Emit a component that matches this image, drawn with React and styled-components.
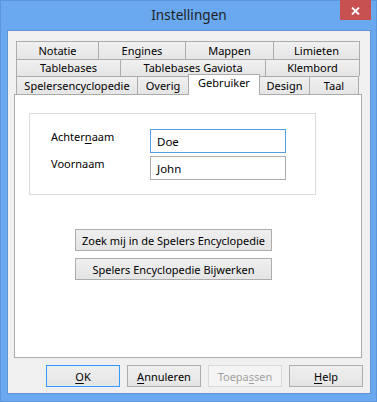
import React from 'react';
import styled, { createGlobalStyle } from 'styled-components';

const GlobalStyle = createGlobalStyle`
  html, body {
    margin: 0;
    padding: 0;
    background: #ffffff;
  }
  body {
    font-family: "Noto Sans", "Open Sans", sans-serif;
    font-size: 11px;
    color: #000;
  }
`;

const tabRows = [
  [
    { label: 'Notatie', w: 83 },
    { label: 'Engines', w: 88 },
    { label: 'Mappen', w: 89 },
    { label: 'Limieten', w: 87 },
  ],
  [
    { label: 'Tablebases', w: 105 },
    { label: 'Tablebases Gaviota', w: 146 },
    { label: 'Klembord', w: 95 },
  ],
  [
    { label: 'Spelersencyclopedie', w: 122 },
    { label: 'Overig', w: 52 },
    { label: 'Gebruiker', w: 72, active: true },
    { label: 'Design', w: 51 },
    { label: 'Taal', w: 50 },
  ],
];

export default function App() {
  return (
    <>
      <GlobalStyle />
      <Window>
        <TitleBar>
          <span />
          <Title>Instellingen</Title>
          <CloseButton>
            <svg width="9" height="8" viewBox="0 0 9 8">
              <path d="M1 0.5 L8 7.5 M8 0.5 L1 7.5" stroke="#fff" strokeWidth="1.8" />
            </svg>
          </CloseButton>
        </TitleBar>
        <Client>
          <TabStrip>
            {tabRows.map((row, i) => (
              <TabRow key={i} h={i === 1 ? 17 : 18}>
                {row.map((t) => (
                  <Tab key={t.label} w={t.w} active={t.active}>
                    {t.label}
                  </Tab>
                ))}
              </TabRow>
            ))}
          </TabStrip>
          <Panel>
            <GroupBox>
              <FieldLabel>
                Achter<Accel>n</Accel>aam
              </FieldLabel>
              <TextInput focused>Doe</TextInput>
              <FieldLabel>Voornaam</FieldLabel>
              <TextInput>John</TextInput>
            </GroupBox>
            <ActionList>
              <Button>Zoek mij in de Spelers Encyclopedie</Button>
              <Button>Spelers Encyclopedie Bijwerken</Button>
            </ActionList>
          </Panel>
          <ButtonBar>
            <Button w={74} primary>
              <Accel>O</Accel>K
            </Button>
            <Button w={74}>
              <Accel>A</Accel>nnuleren
            </Button>
            <Button w={74} disabled>
              Toepa<Accel>s</Accel>sen
            </Button>
            <Button w={74}>
              <Accel>H</Accel>elp
            </Button>
          </ButtonBar>
        </Client>
      </Window>
    </>
  );
}

const Window = styled.div`
  width: 377px;
  height: 402px;
  box-sizing: border-box;
  background: #6aa9f0;
  box-shadow: inset 0 0 0 1px #5b96dc;
  display: flex;
  flex-direction: column;
  padding: 0 6px 8px 7px;
`;

const TitleBar = styled.div`
  height: 30px;
  display: grid;
  grid-template-columns: 1fr auto 1fr;
  align-items: start;
  margin-right: -6px;
  padding-right: 6px;
`;

const Title = styled.div`
  font-size: 13.6px;
  color: #1f1f1f;
  line-height: 18px;
  padding-top: 6px;
`;

const CloseButton = styled.div`
  justify-self: end;
  width: 31px;
  height: 20px;
  background: #c75050;
  display: flex;
  align-items: center;
  justify-content: center;
  padding-top: 2px;
  box-sizing: border-box;
`;

const Client = styled.div`
  flex: 1;
  background: #f0f0f0;
  border: 1px solid #5e93d4;
  display: flex;
  flex-direction: column;
  padding: 10px 7px 0 6px;
`;

const TabStrip = styled.div`
  margin: 0 3px 0 2px;
  display: flex;
  flex-direction: column;
`;

const TabRow = styled.div`
  display: flex;
  height: ${(p) => p.h}px;
`;

const Tab = styled.div`
  box-sizing: border-box;
  width: ${(p) => p.w}px;
  flex: none;
  border: 1px solid #acacac;
  border-bottom: none;
  margin-left: -1px;
  &:first-child {
    margin-left: 0;
  }
  background: ${(p) => (p.active ? '#ffffff' : 'linear-gradient(#f0f0f0, #e5e5e5)')};
  display: flex;
  align-items: center;
  justify-content: center;
  white-space: nowrap;
  line-height: 14px;
  ${(p) =>
    p.active &&
    `
    position: relative;
    z-index: 1;
    height: 21px;
    margin-top: -2px;
    padding-bottom: 4px;
  `}
`;

const Panel = styled.div`
  height: 264px;
  box-sizing: border-box;
  margin-right: 1px;
  background: #ffffff;
  border: 1px solid #acacac;
  padding: 18px 0 0 14px;
  display: flex;
  flex-direction: column;
`;

const GroupBox = styled.div`
  width: 287px;
  height: 82px;
  box-sizing: border-box;
  border: 1px solid #dcdcdc;
  display: grid;
  grid-template-columns: 99px 136px;
  grid-auto-rows: 24px;
  row-gap: 3px;
  padding: 15px 0 0 21px;
`;

const FieldLabel = styled.div`
  line-height: 16px;
`;

const TextInput = styled.div`
  box-sizing: border-box;
  border: 1px solid ${(p) => (p.focused ? '#569de5' : '#abadb3')};
  background: #fff;
  padding: 0 6px;
  display: flex;
  align-items: center;
  font-size: 11.5px;
`;

const Accel = styled.span`
  text-decoration: underline;
  text-underline-offset: 2px;
`;

const ActionList = styled.div`
  display: flex;
  flex-direction: column;
  gap: 7px;
  margin: 34px 0 0 46px;
  width: 197px;
`;

const Button = styled.div`
  box-sizing: border-box;
  width: ${(p) => (p.w ? `${p.w}px` : '100%')};
  height: 22px;
  border: 1px solid ${(p) => (p.primary ? '#3399ff' : p.disabled ? '#d9d9d9' : '#adadad')};
  background: ${(p) => (p.disabled ? '#f4f4f4' : 'linear-gradient(#efefef, #e4e4e4)')};
  color: ${(p) => (p.disabled ? '#a0a0a0' : '#000')};
  display: flex;
  align-items: center;
  justify-content: center;
  white-space: nowrap;
  font-size: 11px;
`;

const ButtonBar = styled.div`
  display: flex;
  justify-content: flex-end;
  gap: 7px;
  margin-top: 7px;
`;
